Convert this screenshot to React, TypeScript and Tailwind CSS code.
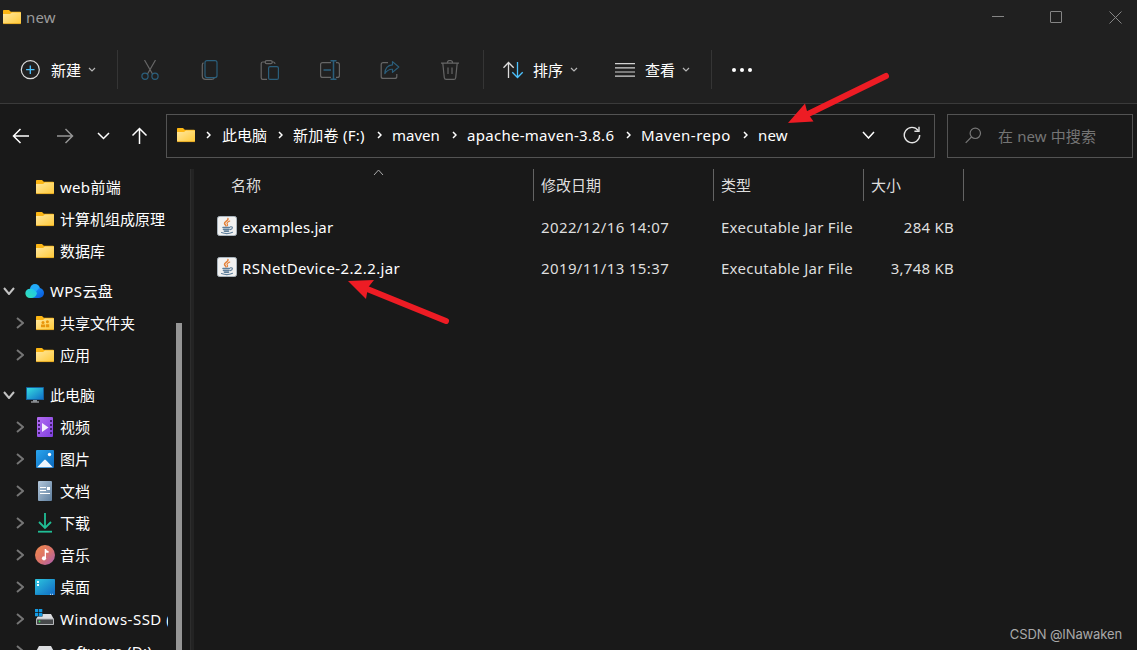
import React from 'react';

type IconProps = { className?: string };

const Chevron: React.FC<IconProps & { dir: 'up' | 'down' | 'right'; w: number; h: number; stroke?: number }> = ({ dir, w, h, stroke = 1.5, className }) => {
  const points = {
    up: `1,${h - 1} ${w / 2},1 ${w - 1},${h - 1}`,
    down: `1,1 ${w / 2},${h - 1} ${w - 1},1`,
    right: `1,1 ${w - 1},${h / 2} 1,${h - 1}`,
  };
  return (
    <svg width={w} height={h} viewBox={`0 0 ${w} ${h}`} fill="none" stroke="currentColor" strokeWidth={stroke} className={`shrink-0 ${className ?? ''}`}>
      <polyline points={points[dir]} />
    </svg>
  );
};

const Folder: React.FC<{ shared?: boolean }> = ({ shared }) => (
  <svg width="20" height="20" viewBox="0 0 20 20" className="shrink-0">
    <defs>
      <linearGradient id="folder" x1="0" y1="0" x2="1" y2="1">
        <stop offset="0" stopColor="#ffe8a0" />
        <stop offset="1" stopColor="#ffc937" />
      </linearGradient>
    </defs>
    <path d="M1 3.800q0-.8.8-.8H7l1.800 1.800H18q1 0 1 1V12H1z" fill="#fcb614" />
    <path d="M1 7h7l2-1.400h9V16q0 1-1 1H2q-1 0-1-1z" fill="url(#folder)" />
    <path d="M1 16.600h18" stroke="#dfa11c" strokeWidth=".8" />
    {shared && (
      <g fill="#e8960c">
        <circle cx="8" cy="9.600" r="1.500" />
        <circle cx="12.400" cy="8.800" r="1.500" />
        <path d="M6 11.600h4v2.600H6zM10.800 11.200h3.400v3h-3.400z" />
      </g>
    )}
  </svg>
);

const Cloud = () => (
  <svg width="20" height="20" viewBox="0 0 20 20" className="shrink-0">
    <defs>
      <linearGradient id="cloudL" x1="0" y1="1" x2="1" y2="0">
        <stop offset="0" stopColor="#35e0b0" />
        <stop offset="1" stopColor="#1cc4f2" />
      </linearGradient>
      <linearGradient id="cloudR" x1="0" y1="0" x2="1" y2="1">
        <stop offset="0" stopColor="#1b9bff" />
        <stop offset="1" stopColor="#0755d8" />
      </linearGradient>
    </defs>
    <circle cx="10" cy="8" r="5" fill="#22aaf8" />
    <path d="M6 17 14 7a5 5 0 0 1 5 5 5 5 0 0 1-5 5z" fill="url(#cloudR)" />
    <path d="M5 17a4.600 4.600 0 0 1 0-9.300c3-.2 5.400 1.500 7 4.300C11.500 15 9 17 5 17z" fill="url(#cloudL)" />
  </svg>
);

const Monitor = () => (
  <svg width="20" height="20" viewBox="0 0 20 20" className="shrink-0">
    <defs>
      <linearGradient id="screen" x1="0" y1="0" x2="1" y2="1">
        <stop offset="0" stopColor="#36dcdf" />
        <stop offset="1" stopColor="#1070c8" />
      </linearGradient>
    </defs>
    <rect x="1" y="2" width="18" height="13" rx=".5" fill="#145f9c" />
    <rect x="2" y="3" width="16" height="11" fill="url(#screen)" />
    <path d="M8 15h4v1.500h-4z" fill="#8a9299" />
    <path d="M6 16.500h8v1H6z" fill="#c6cbd0" />
  </svg>
);

const Video = () => (
  <svg width="20" height="20" viewBox="0 0 20 20" className="shrink-0">
    <defs>
      <linearGradient id="video" x1="0" y1="0" x2="1" y2="1">
        <stop offset="0" stopColor="#b46cf2" />
        <stop offset="1" stopColor="#7f3fe0" />
      </linearGradient>
    </defs>
    <rect x="2" width="16" height="20" rx="1" fill="url(#video)" />
    <path d="M4 3v15M16 3v15" stroke="#41206f" strokeWidth="2" strokeDasharray="2 2" />
    <path d="M7 6v9l6.500-4.500z" fill="#f5eefe" />
  </svg>
);

const Picture = () => (
  <svg width="20" height="20" viewBox="0 0 20 20" className="shrink-0">
    <defs>
      <linearGradient id="picture" x1="0" y1="0" x2="1" y2="1">
        <stop offset="0" stopColor="#2aa5ee" />
        <stop offset="1" stopColor="#0a68bd" />
      </linearGradient>
    </defs>
    <rect x="1" y="1" width="18" height="18" rx="1" fill="url(#picture)" />
    <circle cx="14.500" cy="5.500" r="1.700" fill="#fff" />
    <path d="M2.200 18.300 9.200 11q.8-.8 1.600 0l7 7.300z" fill="#eef6fd" />
  </svg>
);

const Document = () => (
  <svg width="20" height="20" viewBox="0 0 20 20" className="shrink-0">
    <defs>
      <linearGradient id="doc" x1="0" y1="0" x2="1" y2="1">
        <stop offset="0" stopColor="#b3c7da" />
        <stop offset="1" stopColor="#5f7f9f" />
      </linearGradient>
    </defs>
    <rect x="3" width="14" height="20" rx="1" fill="url(#doc)" />
    <path d="M5 6.500h6M5 9.500h6M5 12.500h10M12 7.500h3" stroke="#fff" strokeWidth="1.200" />
    <path d="M12 6h3v3h-3z" fill="#fff" />
  </svg>
);

const Download = () => (
  <svg width="20" height="20" viewBox="0 0 20 20" fill="none" stroke="#20bd95" strokeWidth="1.800" className="shrink-0">
    <path d="M10 0v15M4 9l6 6 6-6" />
    <path d="M3 18.700h14" />
  </svg>
);

const Music = () => (
  <svg width="20" height="20" viewBox="0 0 20 20" className="shrink-0">
    <defs>
      <linearGradient id="music" x1="0" y1="0" x2="1" y2="1">
        <stop offset="0" stopColor="#f08a4c" />
        <stop offset=".5" stopColor="#dc7468" />
        <stop offset="1" stopColor="#a75cb4" />
      </linearGradient>
    </defs>
    <circle cx="10" cy="10" r="10" fill="url(#music)" />
    <circle cx="9" cy="13.300" r="2.100" fill="#fff" />
    <path d="M9.700 4H11q.3 1.800 2.600 2v1.800H11v5.500H9.700z" fill="#fff" />
  </svg>
);

const Desktop = () => (
  <svg width="20" height="20" viewBox="0 0 20 20" className="shrink-0">
    <defs>
      <linearGradient id="desktop" x1="0" y1="0" x2="1" y2="1">
        <stop offset="0" stopColor="#2cc5de" />
        <stop offset="1" stopColor="#1168c4" />
      </linearGradient>
    </defs>
    <rect y="2" width="20" height="16" rx=".8" fill="url(#desktop)" />
    <path d="M2 4h2v2H2zM2 7h2v2H2z" fill="#e8fbff" />
    <path d="M1 17.300h14" stroke="#1588c8" />
    <path d="M15 17.300h1M17 17.300h1" stroke="#d8ecf8" />
  </svg>
);

const Drive: React.FC<{ system?: boolean }> = ({ system }) => (
  <svg width="20" height="20" viewBox="0 0 20 20" className="shrink-0">
    <path d="M4 5h12l3 5.500H1z" fill="#dcdde0" />
    <rect x="1" y="9.500" width="18" height="6.500" rx=".8" fill="#b5b7ba" />
    <rect x="2" y="10.500" width="16" height="4.500" fill="#47494b" />
    <circle cx="4.500" cy="12.500" r=".9" fill="#3edb52" />
    {system && (
      <>
        <path d="M0 0h7.500v7.500H0z" fill="#191919" />
        <path d="M0 0h3.300v3.300H0zM4 0h3.300v3.300H4zM0 4h3.300v3.300H0zM4 4h3.300v3.300H4z" fill="#149be4" />
      </>
    )}
  </svg>
);

const JarIcon = () => (
  <svg width="20" height="20" viewBox="0 0 20 20" fill="none" className="shrink-0 -mt-0.5">
    <rect x=".5" y=".5" width="19" height="19" rx="2" fill="#f1f1f1" stroke="#a9b4bd" />
    <g stroke="#e5823a" strokeLinecap="round">
      <path d="M11 2.500c1 2-4 3-3.500 5 .2 1 1.500 1.500 1.500 2.500" strokeWidth="1.500" />
      <path d="M12.700 5c-1.700.8-3 1.500-2.600 2.700.3.800 1 .9.200 2" strokeWidth="1.200" />
    </g>
    <g stroke="#5f7f9b" strokeLinecap="round">
      <path d="M6 11.500h6.500M6.500 13.500h5.500M7.500 15.300h4" strokeWidth="1.600" />
      <path d="M13.500 10.800c2.600-.5 2.600 2-.3 2.800M4.500 16.500c3 1.200 8 1.200 11-.3" strokeWidth="1.100" />
    </g>
  </svg>
);

const PlusCircle = () => (
  <svg width="20" height="20" viewBox="0 0 20 20" fill="none">
    <circle cx="10.300" cy="9.700" r="9" stroke="#dcdcdc" strokeWidth="1.200" />
    <path d="M10.300 5.500v8.400M6.100 9.700h8.400" stroke="#4cc2ff" strokeWidth="1.300" />
  </svg>
);

const GREY = '#666';
const BLUE = '#2b5f7c';

const actions = [
  // cut
  <g key="cut" strokeWidth="1.200">
    <path d="M4.500 0 12.500 14M15.500 0l-8 14" stroke={GREY} />
    <circle cx="5" cy="16.300" r="3.100" stroke={BLUE} />
    <circle cx="15" cy="16.300" r="3.100" stroke={BLUE} />
  </g>,
  // copy
  <g key="copy" strokeWidth="1.200">
    <path d="M3.500 2.800C2.300 3.500 2.300 4.500 2.300 5v11q0 3.400 3.400 3.400h6q2 0 2.600-1.400" stroke={GREY} />
    <rect x="5" y=".6" width="12" height="17" rx="2" stroke={BLUE} />
  </g>,
  // paste
  <g key="paste" strokeWidth="1.200">
    <path d="M6 2H2.800q-1.600 0-1.600 1.600v14.200q0 1.600 1.600 1.600H7M12 2h1.400q1.600 0 1.600 2" stroke={GREY} />
    <rect x="5.200" y=".6" width="7" height="3" rx="1.400" stroke={GREY} />
    <rect x="8.600" y="6.600" width="9.800" height="12.800" rx="1.500" stroke={BLUE} />
  </g>,
  // rename
  <g key="rename" strokeWidth="1.200">
    <path d="M11 2.600H2.600Q.6 2.600.6 4.600v10.800q0 2 2 2H11M16 2.600h1.400q2 0 2 2v10.800q0 2-2 2H16" stroke={GREY} />
    <path d="M3.500 10h7.500M13.500 1v18M10.500.7h6M10.500 19.300h6" stroke={BLUE} strokeWidth="1.500" />
  </g>,
  // share
  <g key="share" strokeWidth="1.200" strokeLinejoin="round">
    <path d="M8 2.600H3.200q-2 0-2 2v11.800q0 2 2 2h11.600q2 0 2-2V14" stroke={GREY} />
    <path d="M12.500 1.600 18.800 7l-6.300 5.400V9.300C9 9 7 10.500 4.800 13.600 5 8.500 8 5.200 12.500 4.800z" stroke={BLUE} />
  </g>,
  // delete
  <g key="delete" strokeWidth="1.200" stroke={GREY}>
    <path d="M1 3.200h18M7.300 3.200q0-2.700 2.700-2.700t2.700 2.700M2.800 3.200l1.500 14.500q.2 1.700 1.900 1.700h7.600q1.700 0 1.900-1.700l1.500-14.500M8 7.500v6.500M12 7.500v6.500" />
  </g>,
];

const crumbs = [
  { text: '此电脑', cls: 'w-[71px]' },
  { text: '新加卷 (F:)', cls: 'w-[99px] tracking-[0.25px]' },
  { text: 'maven', cls: 'w-[75px]' },
  { text: 'apache-maven-3.8.6', cls: 'w-[174px] tracking-[0.28px]' },
  { text: 'Maven-repo', cls: 'w-[117px] tracking-[0.5px]' },
  { text: 'new', cls: 'tracking-[0.2px]' },
];

type NavItem = { label: string; icon: React.ReactNode; level: 0 | 1; arrow?: 'open' | 'closed'; cls?: string };

const groups: NavItem[][] = [
  [
    { label: 'web前端', icon: <Folder />, level: 1, cls: 'tracking-[0.3px]' },
    { label: '计算机组成原理', icon: <Folder />, level: 1 },
    { label: '数据库', icon: <Folder />, level: 1 },
  ],
  [
    { label: 'WPS云盘', icon: <Cloud />, level: 0, arrow: 'open', cls: 'tracking-[0.4px]' },
    { label: '共享文件夹', icon: <Folder shared />, level: 1, arrow: 'closed' },
    { label: '应用', icon: <Folder />, level: 1, arrow: 'closed' },
  ],
  [
    { label: '此电脑', icon: <Monitor />, level: 0, arrow: 'open' },
    { label: '视频', icon: <Video />, level: 1, arrow: 'closed' },
    { label: '图片', icon: <Picture />, level: 1, arrow: 'closed' },
    { label: '文档', icon: <Document />, level: 1, arrow: 'closed' },
    { label: '下载', icon: <Download />, level: 1, arrow: 'closed' },
    { label: '音乐', icon: <Music />, level: 1, arrow: 'closed' },
    { label: '桌面', icon: <Desktop />, level: 1, arrow: 'closed' },
    { label: 'Windows-SSD (C:)', icon: <Drive system />, level: 1, arrow: 'closed', cls: 'tracking-[0.5px]' },
    { label: 'software (D:)', icon: <Drive />, level: 1, arrow: 'closed', cls: 'tracking-[0.2px]' },
  ],
];

const files = [
  { name: 'examples.jar', nameCls: 'tracking-[0.12px]', date: '2022/12/16 14:07', type: 'Executable Jar File', size: '284 KB' },
  { name: 'RSNetDevice-2.2.2.jar', nameCls: 'tracking-[0.38px]', date: '2019/11/13 15:37', type: 'Executable Jar File', size: '3,748 KB' },
];

const TitleBar = () => (
  <div className="h-9 flex items-center justify-between shrink-0 pl-0.5 pr-[15px]">
    <div className="flex items-center gap-1 -mt-0.5 text-[#9b9b9b]">
      <Folder />
      <span className="tracking-[0.2px]">new</span>
    </div>
    <svg width="132" height="14" viewBox="0 0 132 14" fill="none" stroke="#858585" className="-mt-0.5">
      <path d="M2 6.500h12" />
      <rect x="60.500" y="1.500" width="11" height="11" rx=".5" />
      <path d="M119.500 1.500l12 12M131.500 1.500l-12 12" />
    </svg>
  </div>
);

const Toolbar = () => (
  <div className="h-[67px] flex items-center shrink-0 pl-5 text-white">
    <PlusCircle />
    <span className="ml-[11px] w-[37px]">新建</span>
    <Chevron dir="down" w={8} h={5} stroke={1.2} className="text-[#b5b5b5]" />
    <div className="ml-[21px] w-px h-[39px] bg-[#353535]"></div>
    <div className="ml-[22px] flex gap-10">
      {actions.map(icon => (
        <svg key={icon.key} width="20" height="20" viewBox="0 0 20 20" fill="none">{icon}</svg>
      ))}
    </div>
    <div className="ml-[23px] w-px h-[39px] bg-[#353535]"></div>
    <svg width="22" height="18" viewBox="0 0 22 18" fill="none" strokeWidth="1.300" className="ml-[18px]">
      <path d="M6.500 17V1.500M1.500 6.800l5-5.300 5.200 5.300" stroke="#dcdcdc" />
      <path d="M15.500 1v15.500M10.300 11.200l5.200 5.300 5.200-5.300" stroke="#4cc2ff" />
    </svg>
    <span className="ml-[9px] w-[37px]">排序</span>
    <Chevron dir="down" w={8} h={5} stroke={1.2} className="text-[#b5b5b5]" />
    <svg width="20" height="14" viewBox="0 0 20 14" stroke="#d2d2d2" strokeWidth="1.200" className="ml-[37px]">
      <path d="M0 .6h20M0 4.800h20M0 9h20M0 13.200h20" />
    </svg>
    <span className="ml-[10px] w-[37px]">查看</span>
    <Chevron dir="down" w={8} h={5} stroke={1.2} className="text-[#b5b5b5]" />
    <div className="ml-[21px] w-px h-[39px] bg-[#353535]"></div>
    <svg width="20" height="4" viewBox="0 0 20 4" fill="#fff" className="ml-5">
      <circle cx="2" cy="2" r="2" />
      <circle cx="10" cy="2" r="2" />
      <circle cx="18" cy="2" r="2" />
    </svg>
  </div>
);

const AddressBar = () => (
  <div className="h-[54px] flex shrink-0 pt-[10px] pr-1 text-white">
    <svg width="166" height="44" viewBox="0 0 166 44" fill="none" stroke="#fff" strokeWidth="1.500" className="shrink-0">
      <path d="M29 22H13.500M20.500 15l-7 7 7 7" />
      <path d="M57 22h15.500M65.500 15l7 7-7 7" stroke="#959595" />
      <path d="M98 19l5.500 5.500L109 19" />
      <path d="M139.500 30V14.500M132.500 21.500l7-7 7 7" />
    </svg>
    <div className="w-[769px] h-11 border border-[#535353] flex items-center pl-[9px] pr-[13px] pb-0.5">
      <Folder />
      <Chevron dir="right" w={5} h={8} className="ml-[10px] mr-[11px]" />
      {crumbs.map((c, i) => (
        <div key={i} className={`flex items-center justify-between whitespace-nowrap ${c.cls}`}>
          <span>{c.text}</span>
          {i < crumbs.length - 1 && <Chevron dir="right" w={5} h={8} className="mr-[10px]" />}
        </div>
      ))}
      <Chevron dir="down" w={13} h={8} className="ml-auto mr-7" />
      <svg width="18" height="18" viewBox="0 0 18 18" fill="none" stroke="#e4e4e4" strokeWidth="1.400">
        <path d="M15.200 4.500A7.700 7.700 0 1 0 16.700 9" />
        <path d="M16 .8v4.400h-4.600" />
      </svg>
    </div>
    <div className="ml-3 w-[186px] h-11 border border-[#535353] flex items-center pl-[17px] text-[#757575]">
      <svg width="17" height="17" viewBox="0 0 17 17" fill="none" stroke="#777" strokeWidth="1.200" className="-mt-0.5">
        <circle cx="10.300" cy="6.300" r="5.200" />
        <path d="M6.500 10 .7 15.800" />
      </svg>
      <span className="ml-4 tracking-[0.12px]">在 new 中搜索</span>
    </div>
  </div>
);

const Sidebar = () => (
  <div className="w-[194px] flex shrink-0 text-white">
    <div className="w-[168px] flex flex-col gap-2 pt-[13px] overflow-hidden">
      {groups.map((group, g) => (
        <div key={g}>
          {group.map(item => (
            <div key={item.label} className={`h-8 flex items-center whitespace-nowrap ${item.level ? 'pl-[15px]' : 'pl-[3px]'}`}>
              <div className={`flex items-center shrink-0 ${item.level ? 'w-5' : 'w-[22px]'}`}>
                {item.arrow === 'open' && <Chevron dir="down" w={12} h={8} stroke={2} className="text-[#c2c2c2]" />}
                {item.arrow === 'closed' && <Chevron dir="right" w={8} h={12} stroke={2} className="ml-[1px] text-[#757575]" />}
              </div>
              {item.icon}
              <span className={`ml-[5px] ${item.cls ?? ''}`}>{item.label}</span>
            </div>
          ))}
        </div>
      ))}
    </div>
    <div className="ml-2 mt-[165px] w-1.5 bg-[#959595]"></div>
    <div className="ml-2 mt-[11px] w-1 bg-[#232323] border-l border-[#2d2d2d]"></div>
  </div>
);

const FileList = () => (
  <div className="flex-1 flex flex-col pt-[11px] text-[#dedede]">
    <div className="flex h-8 items-center">
      <div className="w-[340px] h-8 pl-[37px] flex items-center relative border-r border-[#636363]">
        <span>名称</span>
        <Chevron dir="up" w={11} h={7} stroke={1} className="absolute left-[179px] top-0 text-[#aaa]" />
      </div>
      <div className="w-[180px] h-8 pl-[7px] flex items-center border-r border-[#636363]">修改日期</div>
      <div className="w-[150px] h-8 pl-[7px] flex items-center border-r border-[#636363]">类型</div>
      <div className="w-[100px] h-8 pl-[7px] flex items-center border-r border-[#636363]">大小</div>
    </div>
    <div className="pt-[5px]">
      {files.map(file => (
        <div key={file.name} className="h-[41px] flex items-center pl-[23px]">
          <div className="w-[324px] flex items-center gap-[5px] text-white">
            <JarIcon />
            <span className={file.nameCls}>{file.name}</span>
          </div>
          <span className="w-[180px] tracking-[0.38px]">{file.date}</span>
          <span className="w-[132px] whitespace-nowrap tracking-[0.27px]">{file.type}</span>
          <span className="w-[101px] text-right tracking-[0.25px]">{file.size}</span>
        </div>
      ))}
    </div>
  </div>
);

const App: React.FC = () => (
  <div className="relative w-[1137px] h-[650px] flex flex-col overflow-hidden bg-[#191919] text-[15px] leading-5 font-['Noto_Sans','Noto_Sans_CJK_SC',sans-serif]">
    <div className="h-[104px] shrink-0 bg-[#202020] border-b border-[#3a3a3a]">
      <TitleBar />
      <Toolbar />
    </div>
    <AddressBar />
    <div className="flex-1 flex min-h-0">
      <Sidebar />
      <FileList />
    </div>

    {/* Hand-drawn pointers over the window */}
    <svg width="1137" height="650" viewBox="0 0 1137 650" className="absolute inset-0 pointer-events-none" fill="#ed1c24">
      <path d="M886 76 805 115.500" stroke="#ed1c24" strokeWidth="6" strokeLinecap="round" />
      <path d="M788 123l17-19.500 2.500 9.500 6 8.500z" />
      <path d="M446 321 366 288.500" stroke="#ed1c24" strokeWidth="6" strokeLinecap="round" />
      <path d="M348 281l26-1-6 7.500-2 11.500z" />
    </svg>
    <div className="absolute right-[15px] bottom-1.5 text-[13px] tracking-[-0.12px] text-[#a9a9a9] font-['Inter','Liberation_Sans',sans-serif]">CSDN @INawaken</div>
  </div>
);

export default App;
